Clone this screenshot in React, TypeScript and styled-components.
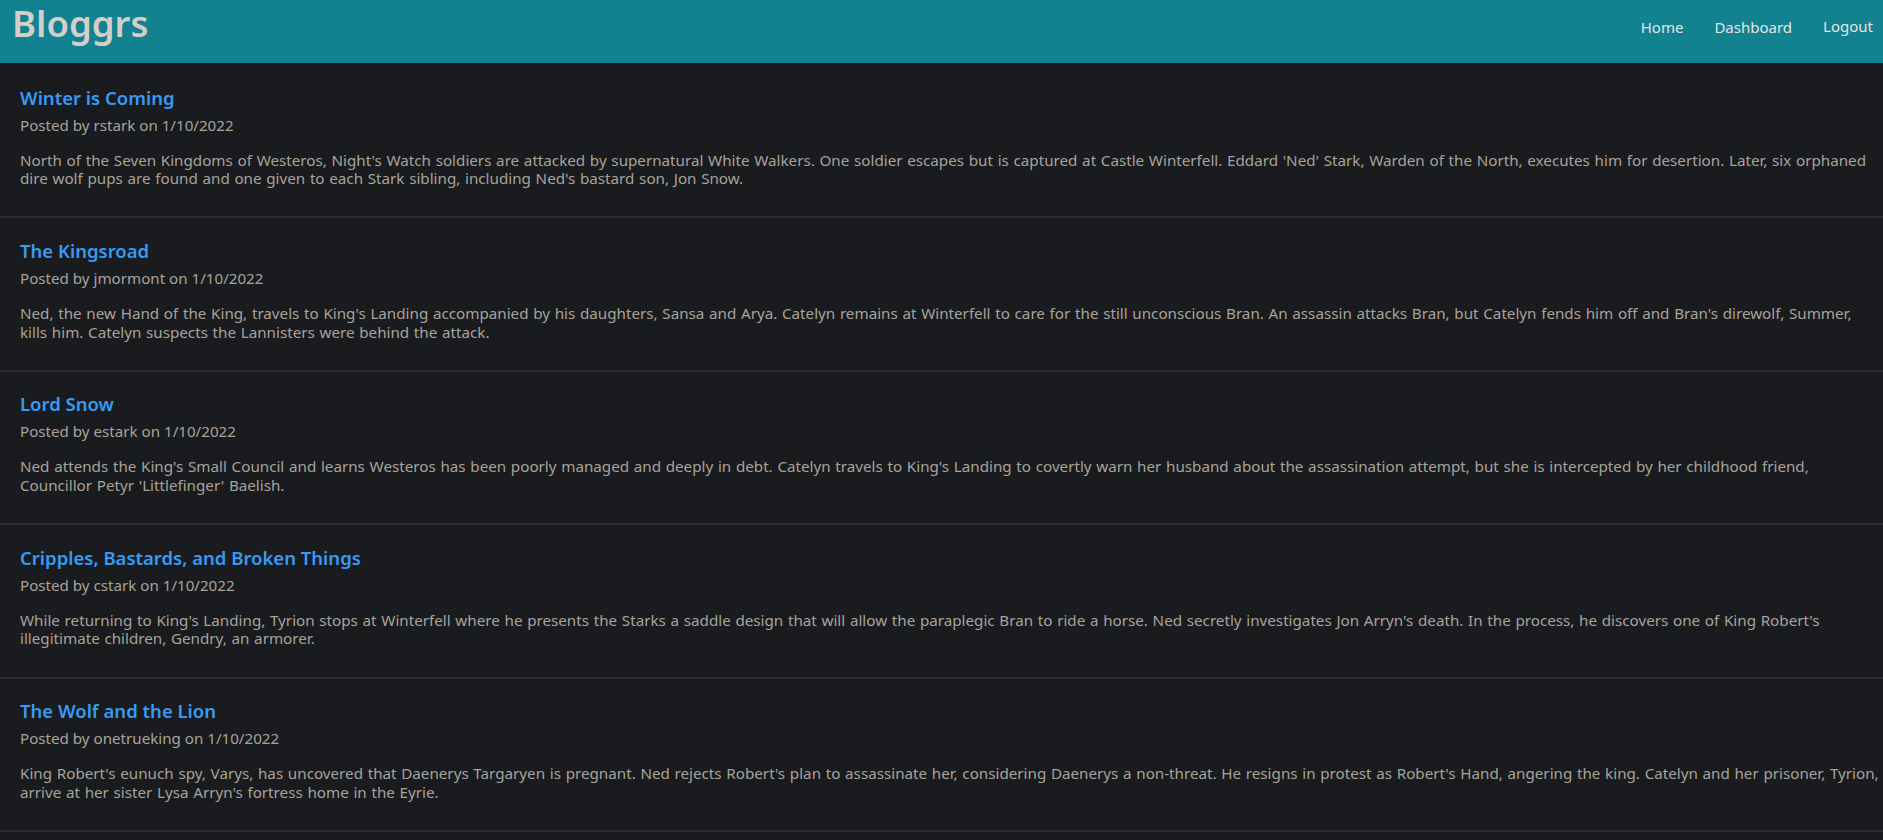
import React from "react";
import styled, { createGlobalStyle } from "styled-components";

const GlobalStyle = createGlobalStyle`
  html, body {
    margin: 0;
    padding: 0;
    background: #1a1b1e;
  }
  body {
    font-family: "Noto Sans", "Open Sans", sans-serif;
    color: #a7a39b;
  }
`;

const Page = styled.div`
  min-height: 100vh;
  background: #1a1b1e;
`;

const Header = styled.header`
  height: 63px;
  box-sizing: border-box;
  background: #128190;
  display: flex;
  align-items: flex-start;
  justify-content: space-between;
  padding: 3px 10px 0 12px;
`;

const Brand = styled.h1`
  margin: 0;
  font-size: 36.5px;
  line-height: 40px;
  font-weight: 600;
  color: #d3cfc8;
`;

const Nav = styled.nav`
  display: flex;
  gap: 31px;
  padding-top: 14px;
`;

const NavLink = styled.a<{ $raise?: boolean }>`
  font-size: 15px;
  line-height: 20px;
  color: #e4e4e4;
  text-decoration: none;
  cursor: pointer;
  transform: translateY(${(p) => (p.$raise ? "-1px" : "0")});
`;

const PostList = styled.main`
  padding-top: 2px;
`;

const Post = styled.article`
  padding: 20.5px 0 28.5px 20px;
  border-bottom: 2px solid #2c2e33;
`;

const Title = styled.h2`
  margin: 0;
  font-size: 18.5px;
  line-height: 24px;
  font-weight: 600;
  color: #359cf5;
`;

const Meta = styled.div`
  margin-top: 5px;
  font-size: 15.15px;
  line-height: 20px;
  color: #a7a39b;
`;

const Body = styled.p`
  margin: 16px 0 0;
  font-size: 15.2px;
  word-spacing: 0.75px;
  line-height: 18.7px;
  color: #a7a39b;
`;

type PostData = { title: string; author: string; date: string; body: string };

const posts: PostData[] = [
  {
    title: "Winter is Coming",
    author: "rstark",
    date: "1/10/2022",
    body:
      "North of the Seven Kingdoms of Westeros, Night's Watch soldiers are attacked by supernatural White Walkers. One soldier escapes but is captured at Castle Winterfell. Eddard 'Ned' Stark, Warden of the North, executes him for desertion. Later, six orphaned dire wolf pups are found and one given to each Stark sibling, including Ned's bastard son, Jon Snow.",
  },
  {
    title: "The Kingsroad",
    author: "jmormont",
    date: "1/10/2022",
    body:
      "Ned, the new Hand of the King, travels to King's Landing accompanied by his daughters, Sansa and Arya. Catelyn remains at Winterfell to care for the still unconscious Bran. An assassin attacks Bran, but Catelyn fends him off and Bran's direwolf, Summer, kills him. Catelyn suspects the Lannisters were behind the attack.",
  },
  {
    title: "Lord Snow",
    author: "estark",
    date: "1/10/2022",
    body:
      "Ned attends the King's Small Council and learns Westeros has been poorly managed and deeply in debt. Catelyn travels to King's Landing to covertly warn her husband about the assassination attempt, but she is intercepted by her childhood friend, Councillor Petyr 'Littlefinger' Baelish.",
  },
  {
    title: "Cripples, Bastards, and Broken Things",
    author: "cstark",
    date: "1/10/2022",
    body:
      "While returning to King's Landing, Tyrion stops at Winterfell where he presents the Starks a saddle design that will allow the paraplegic Bran to ride a horse. Ned secretly investigates Jon Arryn's death. In the process, he discovers one of King Robert's illegitimate children, Gendry, an armorer.",
  },
  {
    title: "The Wolf and the Lion",
    author: "onetrueking",
    date: "1/10/2022",
    body:
      "King Robert's eunuch spy, Varys, has uncovered that Daenerys Targaryen is pregnant. Ned rejects Robert's plan to assassinate her, considering Daenerys a non-threat. He resigns in protest as Robert's Hand, angering the king. Catelyn and her prisoner, Tyrion, arrive at her sister Lysa Arryn's fortress home in the Eyrie.",
  },
];

export default function App() {
  return (
    <Page>
      <GlobalStyle />
      <Header>
        <Brand>Bloggrs</Brand>
        <Nav>
          <NavLink>Home</NavLink>
          <NavLink>Dashboard</NavLink>
          <NavLink $raise>Logout</NavLink>
        </Nav>
      </Header>
      <PostList>
        {posts.map((p) => (
          <Post key={p.title}>
            <Title>{p.title}</Title>
            <Meta>
              Posted by {p.author} on {p.date}
            </Meta>
            <Body>{p.body}</Body>
          </Post>
        ))}
      </PostList>
    </Page>
  );
}
